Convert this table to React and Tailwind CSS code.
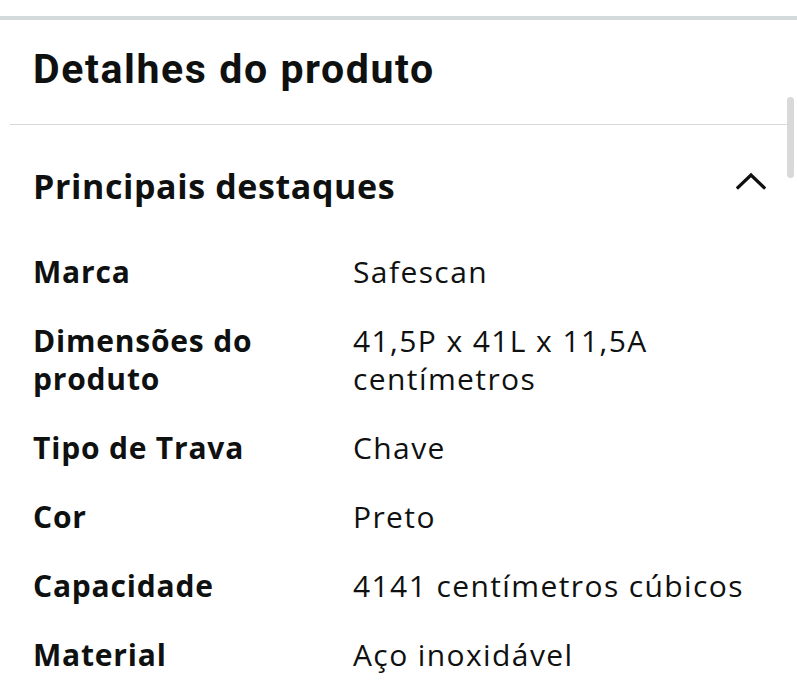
import React from "react";

const highlights = [
    { label: "Marca", value: "Safescan" },
    { label: "Dimensões do produto", value: "41,5P x 41L x 11,5A centímetros" },
    { label: "Tipo de Trava", value: "Chave" },
    { label: "Cor", value: "Preto" },
    { label: "Capacidade", value: "4141 centímetros cúbicos" },
    { label: "Material", value: "Aço inoxidável" },
];

function ChevronUp() {
    return (
        <svg width="30" height="18" viewBox="0 0 30 18" className="mt-[6px] shrink-0">
            <path d="M2 15.5 L15 3 L28 15.5" fill="none" stroke="#0f1111" strokeWidth="3.2" strokeLinecap="square" />
        </svg>
    );
}

export default function App() {
    return (
        <div className="relative w-[797px] h-[700px] overflow-hidden bg-white text-[#0f1111] font-['Open_Sans',sans-serif]">
            <div className="pt-4">
                <div className="border-t-4 border-[#d5dbdb]" />

                {/* Title */}
                <div className="h-[104px] pl-[33px] pt-[25px]">
                    <h1 className="font-['Roboto',sans-serif] font-bold text-[41px] leading-[48px] tracking-[1.6px]">
                        Detalhes do produto
                    </h1>
                </div>
                <div className="mx-[10px] h-px bg-[#d8d8d8]" />

                {/* Principais destaques */}
                <div className="pl-[33px] pr-[31px] pt-[41px]">
                    <div className="flex items-start justify-between">
                        <h2 className="font-bold text-[34px] leading-[40px] tracking-[0.6px]">Principais destaques</h2>
                        <ChevronUp />
                    </div>

                    <div className="mt-[47px] flex flex-col gap-[31px]">
                        {highlights.map((row) => (
                            <div key={row.label} className="flex text-[30px] leading-[38px]">
                                <div className="w-[320px] shrink-0 pr-[60px] font-bold tracking-[0.8px]">{row.label}</div>
                                <div className="flex-1 pr-[10px] tracking-[1.4px]">{row.value}</div>
                            </div>
                        ))}
                    </div>
                </div>
            </div>

            {/* scrollbar thumb */}
            <div className="absolute left-[787px] top-[97px] w-[7px] h-[81px] rounded-full bg-[#d9d9d9]" />
        </div>
    );
}
